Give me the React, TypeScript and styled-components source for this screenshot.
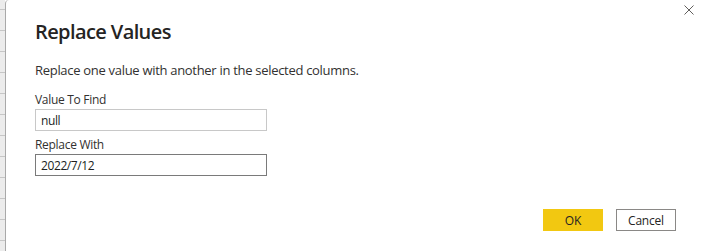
import React from "react";
import styled, { createGlobalStyle } from "styled-components";

const Global = createGlobalStyle`
  html, body { margin: 0; padding: 0; background: #ffffff; }
  body { font-family: "Segoe UI", "Open Sans", "Liberation Sans", sans-serif; }
  * { box-sizing: border-box; }
`;

const Page = styled.div`
  display: flex;
  width: 704px;
  height: 251px;
  overflow: hidden;
  background: #ffffff;
`;

const RowHeaders = styled.div`
  width: 5px;
  flex: 0 0 5px;
  background-color: #ececec;
  background-image: repeating-linear-gradient(
    to bottom,
    transparent 0px,
    transparent 9px,
    #c6c6c6 9px,
    #c6c6c6 10px,
    transparent 10px,
    transparent 21px
  );
`;

const Dialog = styled.div`
  position: relative;
  flex: 1;
  border-left: 1px solid #a9a9a9;
  border-top-left-radius: 4px;
  background: #ffffff;
  padding: 18px 28px 0 29px;
  display: flex;
  flex-direction: column;
`;

const Title = styled.h1`
  margin: 0;
  font-size: 20px;
  font-weight: 600;
  line-height: 28px;
  color: #252423;
  letter-spacing: -0.6px;
`;

const Subtitle = styled.p`
  margin: 15px 0 0;
  font-size: 13px;
  line-height: 18px;
  color: #323130;
  letter-spacing: -0.3px;
`;

const Field = styled.div<{ $top: number }>`
  display: flex;
  flex-direction: column;
  margin-top: ${(p) => p.$top}px;
`;

const Label = styled.label`
  font-size: 12px;
  line-height: 16px;
  color: #323130;
  letter-spacing: -0.3px;
  margin-bottom: 1px;
`;

const Input = styled.div<{ $focused?: boolean }>`
  width: 232px;
  height: 22px;
  border: 1px solid ${(p) => (p.$focused ? "#7a7a7a" : "#c8c8c8")};
  padding: 0 5px;
  display: flex;
  align-items: center;
  font-size: 12px;
  letter-spacing: -0.4px;
  color: #201f1e;
  background: #ffffff;
`;

const Footer = styled.div`
  display: flex;
  justify-content: flex-end;
  gap: 13px;
  margin-top: 33px;
`;

const Button = styled.button<{ $primary?: boolean }>`
  width: 60px;
  height: 22px;
  padding: 0;
  font-family: inherit;
  font-size: 12px;
  letter-spacing: -0.2px;
  color: #252423;
  background: ${(p) => (p.$primary ? "#f2c811" : "#ffffff")};
  border: 1px solid ${(p) => (p.$primary ? "#f2c811" : "#8a8886")};
  border-radius: 0;
  cursor: pointer;
`;

const Close = styled.button`
  position: absolute;
  top: 5px;
  right: 10px;
  width: 10px;
  height: 10px;
  padding: 0;
  border: 0;
  background: none;
  display: flex;
`;

export default function App() {
  return (
    <>
      <Global />
      <Page>
        <RowHeaders />
        <Dialog>
          <Close aria-label="Close">
            <svg width="10" height="10" viewBox="0 0 10 10">
              <path d="M0.5 0.5 L9.5 9.5 M9.5 0.5 L0.5 9.5" stroke="#605e5c" strokeWidth="1" />
            </svg>
          </Close>
          <Title>Replace Values</Title>
          <Subtitle>Replace one value with another in the selected columns.</Subtitle>
          <Field $top={13}>
            <Label>Value To Find</Label>
            <Input>null</Input>
          </Field>
          <Field $top={6}>
            <Label>Replace With</Label>
            <Input $focused>2022/7/12</Input>
          </Field>
          <Footer>
            <Button $primary>OK</Button>
            <Button>Cancel</Button>
          </Footer>
        </Dialog>
      </Page>
    </>
  );
}
